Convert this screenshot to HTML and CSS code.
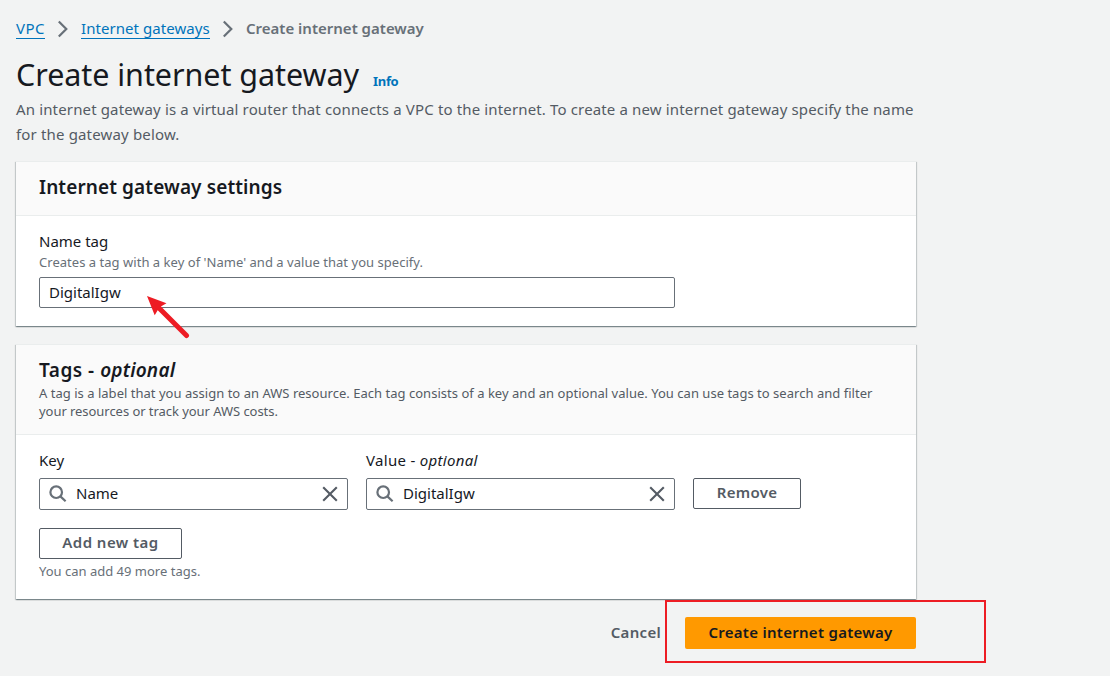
FILE: index.html
```html
<!DOCTYPE html>
<html lang="en">
<head>
<meta charset="utf-8">
<title>Create internet gateway</title>
<link rel="stylesheet" href="styles.css">
</head>
<body>
<main class="page">
  <nav class="breadcrumbs">
    <a class="crumb crumb-vpc" href="#">VPC</a>
    <svg class="chevron" viewBox="0 0 12 18"><path d="M1.8 1.5 9.3 9 1.8 16.5"/></svg>
    <a class="crumb crumb-list" href="#">Internet gateways</a>
    <svg class="chevron" viewBox="0 0 12 18"><path d="M1.8 1.5 9.3 9 1.8 16.5"/></svg>
    <span class="crumb-current">Create internet gateway</span>
  </nav>
  <header class="title-row">
    <h1 class="title">Create internet gateway</h1>
    <a class="info" href="#">Info</a>
  </header>
  <p class="intro"><span class="intro-a">An internet gateway is a virtual router that connects a VPC to the internet. To create a new internet gateway specify the name</span><br><span class="intro-b">for the gateway below.</span></p>

  <section class="panel panel-settings">
    <div class="panel-header"><h2 class="panel-title settings-title">Internet gateway settings</h2></div>
    <div class="panel-body">
      <label class="label label-name">Name tag</label>
      <p class="hint hint-name">Creates a tag with a key of 'Name' and a value that you specify.</p>
      <div class="field field-wide"><span class="value value-igw">DigitalIgw</span></div>
    </div>
    <svg class="arrow" viewBox="0 0 44 44"><path class="arrow-head" d="M1 1 20.5 8.2 15.3 11.2 12 14.8 8.7 20.3Z"/><path class="arrow-shaft" d="M12 12 40.5 40.5"/></svg>
  </section>

  <section class="panel panel-tags">
    <div class="panel-header tags-header">
      <h2 class="panel-title tags-title"><span class="tags-word">Tags - </span><i class="tags-opt">optional</i></h2>
      <p class="tags-text"><span class="tags-a">A tag is a label that you assign to an AWS resource. Each tag consists of a key and an optional value. You can use tags to search and filter</span><br><span class="tags-b">your resources or track your AWS costs.</span></p>
    </div>
    <div class="panel-body tags-body">
      <div class="tag-grid">
        <label class="label label-key">Key</label>
        <label class="label label-value">Value - <i class="label-opt">optional</i></label>
        <span></span>
        <div class="field field-search">
          <svg class="search" viewBox="0 0 18 18"><circle cx="7.2" cy="7.2" r="5.8"/><path d="M11.4 11.4 16.6 16.3"/></svg>
          <span class="value value-name">Name</span>
          <svg class="close" viewBox="0 0 16 16"><path d="M1.2 1.2 14.8 14.8M14.8 1.2 1.2 14.8"/></svg>
        </div>
        <div class="field field-search">
          <svg class="search" viewBox="0 0 18 18"><circle cx="7.2" cy="7.2" r="5.8"/><path d="M11.4 11.4 16.6 16.3"/></svg>
          <span class="value value-igw">DigitalIgw</span>
          <svg class="close" viewBox="0 0 16 16"><path d="M1.2 1.2 14.8 14.8M14.8 1.2 1.2 14.8"/></svg>
        </div>
        <button class="button button-remove"><span class="t-remove">Remove</span></button>
      </div>
      <button class="button button-add"><span class="t-add">Add new tag</span></button>
      <p class="hint hint-count">You can add 49 more tags.</p>
    </div>
  </section>

  <footer class="actions">
    <a class="cancel" href="#">Cancel</a>
    <button class="button primary"><span class="t-create">Create internet gateway</span></button>
    <div class="highlight"></div>
  </footer>
</main>
</body>
</html>
```
FILE: styles.css
```css
* { box-sizing: border-box; }
body {
  margin: 0;
  background: #f2f3f3;
  color: #16191f;
  font-family: "Noto Sans", "Open Sans", sans-serif;
  font-size: 15px;
  white-space: nowrap;
}
h1, h2, p { margin: 0; }
a { color: #0073bb; text-decoration: none; }
svg { display: block; fill: none; flex: none; }
.page { width: 901px; height: 676px; margin-left: 16px; padding-top: 17px; overflow: visible; }

.breadcrumbs { display: flex; align-items: center; height: 22px; }
.crumb { height: 22px; line-height: 22px; border-bottom: 1px solid #0073bb; }
.crumb-vpc { width: 29px; letter-spacing: .4px; }
.crumb-list { width: 129px; letter-spacing: .06px; }
.chevron { width: 12px; height: 18px; margin: 1px 12px 0; stroke: #687078; stroke-width: 2.2; }
.crumb-current { color: #687078; font-weight: 600; line-height: 22px; }

.title-row { display: flex; align-items: baseline; gap: 14px; height: 44px; margin-top: 13px; }
.title { font-size: 30.5px; font-weight: 400; line-height: 44px; letter-spacing: -.06px; }
.info { font-size: 13px; font-weight: 700; letter-spacing: -.3px; }
.intro { color: #545b64; line-height: 25px; margin-top: 1px; }
.intro-a { letter-spacing: .145px; }
.intro-b { letter-spacing: .16px; }

.panel {
  position: relative;
  background: #fff;
  border-top: 1px solid #eaeded;
  box-shadow: 0 1px 1px 0 rgba(0, 28, 36, .3), 1px 1px 1px 0 rgba(0, 28, 36, .15), -1px 1px 1px 0 rgba(0, 28, 36, .15);
  width: 900px;
}
.panel-settings { height: 165px; margin-top: 14px; }
.panel-header { height: 54px; padding: 12px 23px 0; background: #fafafa; border-bottom: 1px solid #eaeded; }
.panel-title { font-size: 19px; font-weight: 600; line-height: 27px; white-space: pre; letter-spacing: .11px; }
.tags-title { letter-spacing: .35px; }
.tags-word { letter-spacing: .5px; }
.tags-opt { letter-spacing: .2px; }
.panel-body { display: flex; flex-direction: column; align-items: flex-start; padding: 13px 23px 0; }
.label { line-height: 24px; }
.label-opt { letter-spacing: .3px; }
.label-value { letter-spacing: .3px; }
.hint { color: #687078; font-size: 13px; line-height: 18px; }
.hint-name { letter-spacing: .03px; }
.field { display: flex; align-items: center; height: 32px; border: 1px solid #687078; border-radius: 2px; background: #fff; padding: 0 9px; }
.value { padding-bottom: 2px; }
.field-wide { width: 636px; height: 31px; margin-top: 6px; }
.arrow { position: absolute; left: 130px; top: 133px; width: 44px; height: 44px; }
.arrow-head { fill: #ed1c24; }
.arrow-shaft { stroke: #ed1c24; stroke-width: 5; stroke-linecap: round; }

.panel-tags { height: 255px; margin-top: 18px; }
.tags-header { height: 90px; }
.tags-text { color: #545b64; font-size: 13px; line-height: 18px; }
.tags-a { letter-spacing: .022px; }
.tags-b { letter-spacing: -.05px; }
.tag-grid { display: grid; grid-template-columns: 309px 309px 108px; column-gap: 18px; row-gap: 6px; }
.search { width: 18px; height: 18px; margin-right: 9px; stroke: #687078; stroke-width: 2.2; }
.close { width: 16px; height: 16px; margin-left: auto; stroke: #545b64; stroke-width: 2.1; }
.button { height: 31px; padding: 0 0 3px; border: 1px solid #545b64; border-radius: 2px; background: #fff; color: #545b64; font: 600 15px "Noto Sans", "Open Sans", sans-serif; }
.button-add { width: 143px; margin-top: 18px; }
.t-remove { letter-spacing: .3px; }
.t-add { letter-spacing: .45px; }
.t-create { letter-spacing: .28px; }
.hint-count { margin-top: 3px; }

.actions { position: relative; display: flex; align-items: center; justify-content: flex-end; width: 900px; gap: 24px; margin-top: 18px; }
.cancel { color: #545b64; font-weight: 600; letter-spacing: .3px; padding-bottom: 2px; }
.primary { width: 231px; height: 32px; border: 0; background: #ff9900; color: #16191f; }
.highlight { position: absolute; left: 649px; top: -17px; width: 321px; height: 63px; border: 2px solid #ed1c24; }
```
